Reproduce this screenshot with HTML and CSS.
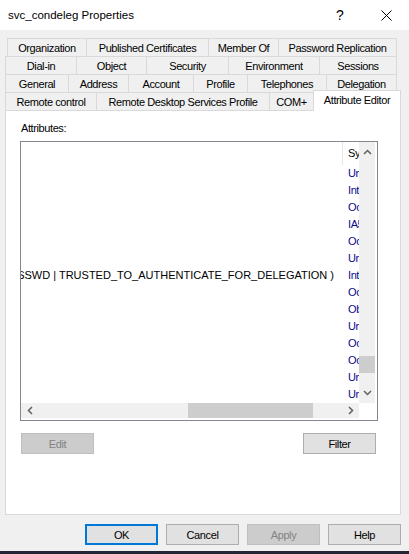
FILE: index.html
```html
<!DOCTYPE html>
<html>
<head>
<meta charset="utf-8">
<link rel="stylesheet" href="styles.css">
</head>
<body>
<div class="titlebar">
  <span class="title">svc_condeleg Properties</span>
  <span class="tb-btn help">?</span>
  <span class="tb-btn close"><svg width="11" height="11" viewBox="0 0 11 11"><path d="M0.5 0.5 L10.5 10.5 M10.5 0.5 L0.5 10.5" stroke="#000" stroke-width="1" fill="none"/></svg></span>
</div>
<div class="tabs">
  <div class="row r1">
    <div class="tab w-org">Organization</div>
    <div class="tab w-pub">Published Certificates</div>
    <div class="tab w-mem">Member Of</div>
    <div class="tab w-pwd">Password Replication</div>
  </div>
  <div class="row r2">
    <div class="tab w-dial">Dial-in</div>
    <div class="tab w-obj">Object</div>
    <div class="tab w-sec">Security</div>
    <div class="tab w-env">Environment</div>
    <div class="tab w-ses">Sessions</div>
  </div>
  <div class="row r3">
    <div class="tab w-gen">General</div>
    <div class="tab w-addr">Address</div>
    <div class="tab w-acc">Account</div>
    <div class="tab w-prof">Profile</div>
    <div class="tab w-tel">Telephones</div>
    <div class="tab w-del">Delegation</div>
  </div>
  <div class="row r4">
    <div class="tab w-rc">Remote control</div>
    <div class="tab w-rds">Remote Desktop Services Profile</div>
    <div class="tab w-com">COM+</div>
    <div class="tab sel w-attr">Attribute Editor</div>
  </div>
</div>
<div class="panel">
  <div class="label">Attributes:</div>
  <div class="list">
    <div class="list-main">
      <div class="view">
        <div class="hdr"><div class="c1"></div><div class="c2 hc">Syntax</div></div>
        <div class="lrow"><div class="c1"></div><div class="c2">Unicode String</div></div>
        <div class="lrow"><div class="c1"></div><div class="c2">Integer</div></div>
        <div class="lrow"><div class="c1"></div><div class="c2">Octet String</div></div>
        <div class="lrow"><div class="c1"></div><div class="c2">IA5-String</div></div>
        <div class="lrow"><div class="c1"></div><div class="c2">Octet String</div></div>
        <div class="lrow"><div class="c1"></div><div class="c2">Unicode String</div></div>
        <div class="lrow"><div class="c1 long"><span>0x1010200 = ( NORMAL_ACCOUNT | DONT_EXPIRE_PASSWD | TRUSTED_TO_AUTHENTICATE_FOR_DELEGATION )</span></div><div class="c2">Integer</div></div>
        <div class="lrow"><div class="c1"></div><div class="c2">Octet String</div></div>
        <div class="lrow"><div class="c1"></div><div class="c2">Object Identifier</div></div>
        <div class="lrow"><div class="c1"></div><div class="c2">Unicode String</div></div>
        <div class="lrow"><div class="c1"></div><div class="c2">Octet String</div></div>
        <div class="lrow"><div class="c1"></div><div class="c2">Octet String</div></div>
        <div class="lrow"><div class="c1"></div><div class="c2">Unicode String</div></div>
        <div class="lrow"><div class="c1"></div><div class="c2">Unicode String</div></div>
      </div>
      <div class="vscroll">
        <div class="vbtn up"><svg width="9" height="6" viewBox="0 0 9 6"><polyline points="1,5 4.5,1.5 8,5" fill="none" stroke="#606060" stroke-width="1.5"/></svg></div>
        <div class="vtrack"><div class="vthumb"></div></div>
        <div class="vbtn down"><svg width="9" height="6" viewBox="0 0 9 6"><polyline points="1,1 4.5,4.5 8,1" fill="none" stroke="#606060" stroke-width="1.5"/></svg></div>
      </div>
    </div>
    <div class="hscroll">
      <div class="hbtn"><svg width="6" height="9" viewBox="0 0 6 9"><polyline points="5,1 1.5,4.5 5,8" fill="none" stroke="#606060" stroke-width="1.5"/></svg></div>
      <div class="htrack"><div class="hthumb"></div></div>
      <div class="hbtn"><svg width="6" height="9" viewBox="0 0 6 9"><polyline points="1,1 4.5,4.5 1,8" fill="none" stroke="#606060" stroke-width="1.5"/></svg></div>
    </div>
  </div>
  <div class="btnrow">
    <button class="btn dis">Edit</button>
    <button class="btn">Filter</button>
  </div>
</div>
<div class="footer">
  <button class="btn def">OK</button>
  <button class="btn">Cancel</button>
  <button class="btn dis">Apply</button>
  <button class="btn">Help</button>
</div>
<div class="bottombar"></div>
</body>
</html>
```

FILE: styles.css
```css
html, body {
  margin: 0;
  padding: 0;
}
body {
  width: 409px;
  height: 554px;
  background: #f0f0f0;
  font-family: "Liberation Sans", Arial, sans-serif;
  font-size: 11px;
  letter-spacing: -0.4px;
  color: #000;
  overflow: hidden;
  display: flex;
  flex-direction: column;
}

/* title bar */
.titlebar {
  height: 30px;
  background: #fff;
  display: flex;
  align-items: center;
  flex: none;
}
.title {
  flex: 1;
  padding-left: 8px;
  font-size: 11.5px;
  letter-spacing: 0;
}
.tb-btn {
  width: 46px;
  height: 30px;
  display: flex;
  align-items: center;
  justify-content: center;
}
.help {
  font-size: 14px;
  letter-spacing: 0;
}

/* tabs */
.tabs {
  margin-top: 8px;
  flex: none;
}
.row {
  display: flex;
  height: 18px;
}
.r1 { padding-left: 7px; }
.r2, .r3, .r4 { padding-left: 5px; }
.tab {
  box-sizing: border-box;
  height: 18px;
  border: 1px solid #d9d9d9;
  border-bottom: none;
  display: flex;
  align-items: center;
  justify-content: center;
  white-space: nowrap;
  flex: none;
}
.tab + .tab { margin-left: -1px; }
.tab.sel {
  height: 21px;
  margin-top: -2px;
  background: #fff;
  position: relative;
  z-index: 1;
  padding-bottom: 3px;
}
.w-org { width: 80px; }
.w-pub { width: 123px; }
.w-mem { width: 71px; }
.w-pwd { width: 119px; }
.w-dial { width: 72px; }
.w-obj { width: 71px; }
.w-sec { width: 83px; }
.w-env { width: 92px; }
.w-ses { width: 78px; }
.w-gen { width: 64px; }
.w-addr { width: 61px; }
.w-acc { width: 66px; }
.w-prof { width: 55px; }
.w-tel { width: 80px; }
.w-del { width: 71px; }
.w-rc { width: 92px; }
.w-rds { width: 174px; }
.w-com { width: 45px; }
.w-attr { width: 88px; }

/* panel */
.panel {
  box-sizing: border-box;
  margin-left: 5px;
  width: 396px;
  height: 405px;
  background: #fff;
  border: 1px solid #d9d9d9;
  padding: 11px 0 0 14px;
  flex: none;
}
.label {
  height: 13px;
  line-height: 13px;
  padding-left: 1px;
  margin-bottom: 6px;
}
.list {
  box-sizing: border-box;
  width: 358px;
  height: 280px;
  border: 1px solid #828790;
  background: #fff;
  padding: 0 2px 2px 0;
  display: flex;
  flex-direction: column;
}
.list-main {
  display: flex;
  height: 261px;
}
.view {
  width: 338px;
  overflow: hidden;
}
.hdr, .lrow {
  display: flex;
  white-space: nowrap;
}
.hdr { height: 23px; }
.lrow { height: 17px; line-height: 17px; }
.c1 {
  width: 321px;
  flex: none;
  overflow: hidden;
}
.c2 {
  flex: none;
  width: 120px;
  padding-left: 5px;
  color: #0a0a8c;
}
.hdr .c2 {
  border-left: 1px solid #e5e5e5;
  line-height: 23px;
  color: #000;
}
.lrow .c2 { margin-left: 1px; }
.long {
  display: flex;
  justify-content: flex-end;
  padding-right: 8px;
  box-sizing: border-box;
  letter-spacing: 0;
}
.long span { flex: none; }

.vscroll {
  width: 16px;
  background: #f0f0f0;
  display: flex;
  flex-direction: column;
}
.vbtn {
  height: 20px;
  display: flex;
  align-items: center;
  justify-content: center;
  flex: none;
}
.vtrack { flex: 1; }
.vthumb {
  margin-top: 194px;
  height: 17px;
  background: #cdcdcd;
}
.hscroll {
  height: 15px;
  width: 338px;
  background: #f0f0f0;
  display: flex;
}
.hbtn {
  width: 17px;
  display: flex;
  align-items: center;
  justify-content: center;
  flex: none;
}
.htrack { flex: 1; }
.hthumb {
  margin-left: 150px;
  width: 125px;
  height: 15px;
  background: #cdcdcd;
}

/* buttons */
.btnrow {
  display: flex;
  justify-content: space-between;
  margin: 12px 0 0 1px;
  width: 355px;
}
.btn {
  box-sizing: border-box;
  width: 73px;
  height: 21px;
  border: 1px solid #adadad;
  background: #e1e1e1;
  font: inherit;
  letter-spacing: inherit;
  color: #000;
  padding: 0;
  margin: 0;
}
.btn.dis {
  background: #cccccc;
  border-color: #bfbfbf;
  color: #838383;
}
.btn.def {
  border: 2px solid #0078d7;
}
.footer {
  display: flex;
  justify-content: flex-end;
  gap: 8px;
  padding-right: 8px;
  margin-top: 9px;
  flex: none;
}
.bottombar {
  margin-top: auto;
  height: 3px;
  background: #232634;
  flex: none;
}
```
